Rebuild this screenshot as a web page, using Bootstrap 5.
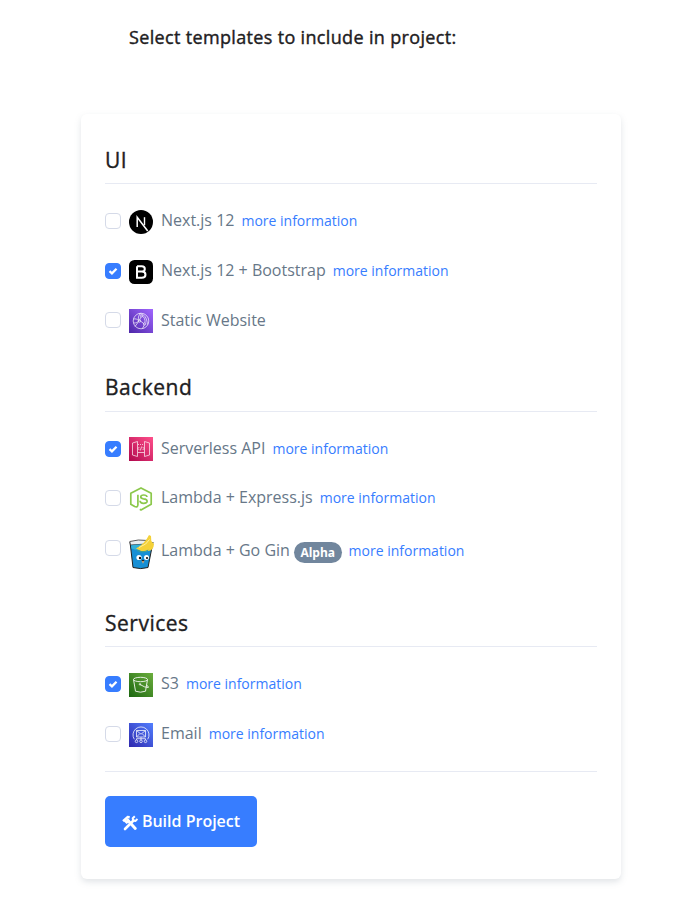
<!doctype html>
<html lang="en">
<head>
<meta charset="utf-8">
<meta name="viewport" content="width=device-width, initial-scale=1">
<title>Build Project</title>
<link href="https://cdn.jsdelivr.net/npm/bootstrap@5.3.0/dist/css/bootstrap.min.css" rel="stylesheet">
<style>
body{font-family:"Open Sans","Noto Sans",sans-serif;font-size:16px;color:#677788;background:#fff;padding-bottom:32px}
.page-title{font-size:18px;font-weight:500;letter-spacing:.34px;-webkit-text-stroke:.4px #1e2022;line-height:28px;color:#1e2022;padding:23px 0 0 129px;height:114px}
.panel{width:540px;height:765px;margin-left:81px;padding:24px;border-radius:6px;border:0;box-shadow:0 3px 6px rgba(140,152,164,.25)}
.sect{font-size:21px;font-weight:500;letter-spacing:.5px;-webkit-text-stroke:.35px #1e2022;line-height:44px;height:46px;color:#1e2022;border-bottom:1px solid #e7eaf3;margin:0 0 12px}
.second{margin-top:21px;line-height:43px}.third{margin-top:27px}
.opt{height:50px}
.opt-48{height:48px}.opt-49{height:49px}.opt-52{height:52px}
.form-check-input.tick{width:16px;height:16px;margin:0 8px 0 0;border:1px solid #d5dae8;border-radius:4px;flex:none}
.opt-49 .tick.tick{margin-bottom:1px}
.form-check-input.tick:checked{background-color:#377dff;border-color:#377dff;background-image:url("data:image/svg+xml,%3Csvg xmlns='http://www.w3.org/2000/svg' viewBox='0 0 16 16'%3E%3Cpath d='M4 8.2 6.800 10.700 12 5.400' fill='none' stroke='%23fff' stroke-width='2.6'/%3E%3C/svg%3E")}
.ico{width:24px;height:24px;flex:none;margin:1px 8px 0 0}
.ico-up{margin-top:-1px}
.ico-gin{width:26px;margin-right:6px;height:36px;margin-top:7px}
.opt label{line-height:24px;margin-top:-2px}
.opt a{font-size:14px;line-height:24px;color:#377dff;text-decoration:none;margin-left:7px}
.alpha{font-size:12px;font-weight:700;background:#71869d;padding:5px 6.5px 4px;line-height:12px;margin:9px 0 0 4px}
.low label{margin-top:3px}.low a{margin-top:5px}
.rule{border-top:1px solid #e7eaf3;margin:12px 0 24px}
.build{width:152px;height:51px;background:#377dff;border:0;border-radius:5px;font-weight:600;font-size:16px;padding:0 0 2px}
</style>
</head>
<body>
<h1 class="page-title mb-0">Select templates to include in project:</h1>
<main class="card panel">
  <h2 class="sect">UI</h2>
  <div class="opt d-flex align-items-center">
    <input class="form-check-input tick" type="checkbox" id="next">
    <svg class="ico" viewBox="0 0 24 24"><circle cx="12" cy="12" r="12"/><path d="M8.200 17V7.300L18.700 21" fill="none" stroke="#fff" stroke-width="1.500"/><path d="M15.500 7.200v8" stroke="#fff" stroke-width="1.400"/></svg>
    <label for="next">Next.js 12</label><a href="#">more information</a>
  </div>
  <div class="opt d-flex align-items-center">
    <input class="form-check-input tick" type="checkbox" id="boot" checked>
    <svg class="ico" viewBox="0 0 24 24"><rect width="24" height="24" rx="5.500"/><path d="M8 6.200h4.800c4 0 4 5.400 0 5.400H8m4.800 0c4.900 0 4.900 6.100 0 6.100H8V6.200" fill="none" stroke="#fff" stroke-width="2"/></svg>
    <label for="boot">Next.js 12 + Bootstrap</label><a href="#">more information</a>
  </div>
  <div class="opt opt-49 d-flex align-items-center">
    <input class="form-check-input tick" type="checkbox" id="static">
    <svg class="ico" viewBox="0 0 24 24"><defs><linearGradient id="gp" x1="0" y1="1" x2="1" y2="0"><stop stop-color="#4d27a8"/><stop offset="1" stop-color="#a166ff"/></linearGradient></defs><rect width="24" height="24" fill="url(#gp)"/><g fill="none" stroke="#fff" stroke-width=".8" opacity=".85"><circle cx="12" cy="12" r="7.800"/><path d="M4.500 10c2-.5 4 .2 5.500 2L6 17.500M12 4.300c-2 1-3.200 4-2.500 7M11.500 12l3.500 2.800M13 6.800c2.200 1 3.400 4 3 7.200M10 4.600c5 0 8 4 8.400 11M5 14c2 .2 3.500-1 5-2l2-4M15.500 15.500l-2 4"/><circle cx="10.500" cy="12" r="1.200"/><circle cx="12.500" cy="7" r="1"/><circle cx="15.500" cy="15" r="1.100"/></g></svg>
    <label for="static">Static Website</label>
  </div>

  <h2 class="sect second">Backend</h2>
  <div class="opt d-flex align-items-center">
    <input class="form-check-input tick" type="checkbox" id="api" checked>
    <svg class="ico ico-up" viewBox="0 0 24 24"><defs><linearGradient id="gr" x1="0" y1="1" x2="1" y2="0"><stop stop-color="#b0084d"/><stop offset="1" stop-color="#ff4f8b"/></linearGradient></defs><rect width="24" height="24" fill="url(#gr)"/><g fill="none" stroke="#fff" stroke-width=".8" opacity=".85"><path d="M8.500 4.500 3.500 6v12l5 1.500zM15.500 4.500l5 1.500v12l-5 1.500zM9 15.500h6.500M10.300 10l-1.300 1.500 1.300 1.500m3.400-3 1.300 1.500-1.300 1.500m-1-3.500-1.400 4"/><path d="M9 7.500h6" stroke-dasharray="1 1"/></g></svg>
    <label for="api">Serverless API</label><a href="#">more information</a>
  </div>
  <div class="opt opt-48 d-flex align-items-center">
    <input class="form-check-input tick" type="checkbox" id="express">
    <svg class="ico" viewBox="0 0 24 24" fill="none" stroke="#8cc84b"><path d="M10.800 22.300 12 23l10.200-5.800V6.200L12 .9 1.800 6.200v11L5.700 19.500c2.100 1 3.200 0 3.200-1.700V7.700" stroke-width="1.700" stroke-linejoin="round"/><path d="M18 10c-.2-1.400-1.400-2-3.300-2-3.900 0-3.900 3.400-.2 3.800 4.800.4 4.900 4.600 0 4.500-2.300 0-3.400-.9-3.500-2.600" stroke-width="1.700"/></svg>
    <label for="express">Lambda + Express.js</label><a href="#">more information</a>
  </div>
  <div class="opt opt-52 low d-flex align-items-center">
    <input class="form-check-input tick" type="checkbox" id="gin">
    <svg class="ico ico-gin" viewBox="0 0 26 36"><path d="M1 8 4 33.500q8 2.200 15 0L24 8" fill="#168fd5" stroke="#222" stroke-width="1"/><path d="M.8 7.500q8-2.500 18-1l-1 3.500L1.500 11z" fill="#e9eef0" stroke="#333" stroke-width=".8"/><path d="M2 11.500q9-2 17 0l-1 3q-8 3-15.500 0z" fill="#32b1d8"/><path d="M7 14.500Q16 9.500 20 1l2 1 .3 5 2.700 3q-.5 7-6 7-6 1.500-12-2.500z" fill="#f4d139"/><path d="M10 13.500q8-3 10.500-8" fill="none" stroke="#fff0a0" stroke-width="1"/><path d="M7.500 15.500q6 3.500 12 0l-1 1.800q-5 2.200-10 0z" fill="#3b9f9a"/><circle cx="10" cy="23.500" r="2.600" fill="#fff"/><circle cx="17.500" cy="23.500" r="2.500" fill="#fff"/><circle cx="11" cy="24" r="1.200" fill="#111"/><circle cx="18" cy="24" r="1.100" fill="#111"/><path d="M12.500 26.700q1.500-1 3 0l-1.500 3z" fill="#d5a778"/><ellipse cx="14" cy="26.500" rx="1.400" ry=".8" fill="#222"/></svg>
    <label for="gin">Lambda + Go Gin</label><span class="badge rounded-pill alpha">Alpha</span><a href="#">more information</a>
  </div>

  <h2 class="sect third">Services</h2>
  <div class="opt d-flex align-items-center">
    <input class="form-check-input tick" type="checkbox" id="s3" checked>
    <svg class="ico" viewBox="0 0 24 24"><defs><linearGradient id="gg" x1="0" y1="1" x2="1" y2="0"><stop stop-color="#1b660f"/><stop offset="1" stop-color="#6cae3e"/></linearGradient></defs><rect width="24" height="24" fill="url(#gg)"/><g fill="none" stroke="#fff" stroke-width=".95" opacity=".9"><ellipse cx="11.500" cy="6.500" rx="7" ry="2.200"/><path d="m4.500 6.500 2 11.700q5 2 10 0l2-11.700M11 11.500q5 3.200 8.300 3 .8-1-2-2.500"/><circle cx="11" cy="11.300" r=".7"/></g></svg>
    <label for="s3">S3</label><a href="#">more information</a>
  </div>
  <div class="opt d-flex align-items-center">
    <input class="form-check-input tick" type="checkbox" id="mail">
    <svg class="ico" viewBox="0 0 24 24"><defs><linearGradient id="gb" x1="0" y1="1" x2="1" y2="0"><stop stop-color="#2e27ad"/><stop offset="1" stop-color="#527fff"/></linearGradient></defs><rect width="24" height="24" fill="url(#gb)"/><g fill="none" stroke="#fff" stroke-width=".85" opacity=".88"><path d="M5.300 16.300a8 8 0 1 1 13.400 0M7.500 7.500h9v6.500h-9zl4.500 3.700 4.500-3.700M7.500 14l3.200-3.200M16.500 14l-3.200-3.200M12 14v3M7.500 17v-1.300h9V17"/><circle cx="7.500" cy="18.300" r="1.300"/><circle cx="12" cy="18.300" r="1.300"/><circle cx="16.500" cy="18.300" r="1.300"/></g></svg>
    <label for="mail">Email</label><a href="#">more information</a>
  </div>
  <div class="rule"></div>
  <button class="btn btn-primary build d-flex align-items-center justify-content-center" type="button">
    <svg width="16" height="16" viewBox="0 0 16 16" fill="none" stroke="#fff" class="me-1 mt-1"><path d="m5.500 5 7.800 8.500" stroke-width="2.900" stroke-linecap="round"/><path d="M1 6.200 5.700 2l2 .2M2.200 5.200l2.500 2.300L7.500 5" stroke-width="2.400"/><path d="m3 14 8.500-8.500" stroke-width="2.600" stroke-linecap="round"/><path d="M12.800 1.300 10.700 3.400l.5 2.200 2.300.3 2-2" stroke-width="2"/></svg>
    <span>Build Project</span>
  </button>
</main>
<script src="https://cdn.jsdelivr.net/npm/bootstrap@5.3.0/dist/js/bootstrap.bundle.min.js"></script>
</body>
</html>
